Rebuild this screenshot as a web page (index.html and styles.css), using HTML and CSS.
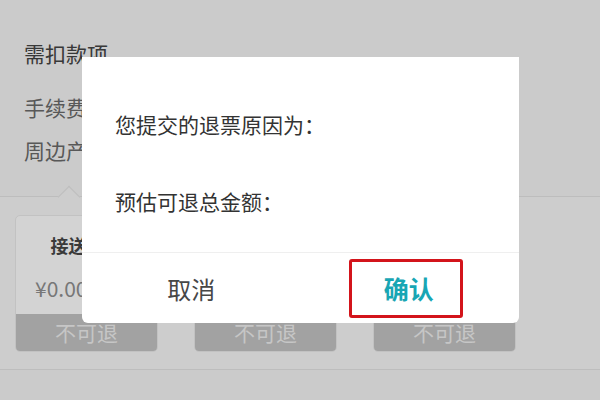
FILE: index.html
```html
<!DOCTYPE html>
<html>
<head>
<meta charset="utf-8">
<meta name="viewport" content="width=device-width, initial-scale=1">
<link rel="stylesheet" href="styles.css">
</head>
<body>

<div class="page">
  <div class="fee-head">需扣款项</div>
  <div class="fee-row">手续费</div>
  <div class="fee-row">周边产品</div>

  <div class="goods">
    <div class="card">
      <div class="card-name">接送服务</div>
      <div class="card-price">¥0.00</div>
      <div class="card-btn">不可退</div>
    </div>
    <div class="card">
      <div class="card-name">接送服务</div>
      <div class="card-price">¥0.00</div>
      <div class="card-btn">不可退</div>
    </div>
    <div class="card">
      <div class="card-name">接送服务</div>
      <div class="card-price">¥0.00</div>
      <div class="card-btn">不可退</div>
    </div>
  </div>
</div>

<div class="dialog">
  <div class="dialog-body">
    <p class="dialog-line">您提交的退票原因为：</p>
    <p class="dialog-line second">预估可退总金额：</p>
  </div>
  <div class="dialog-btns">
    <div class="btn cancel">取消</div>
    <div class="btn">
      <span class="confirm">确认</span>
    </div>
  </div>
</div>

</body>
</html>
```

FILE: styles.css
```css
* {
  box-sizing: border-box;
}

body {
  margin: 0;
  width: 600px;
  height: 400px;
  overflow: hidden;
  background-color: #cbcbcb;
  font-family: "Noto Sans CJK SC", "Noto Sans", sans-serif;
  position: relative;
}

.fee-head {
  padding: 38px 0 0 24px;
  line-height: 30px;
  font-size: 21px;
  color: #383838;
  margin-bottom: 18px;
}

.fee-row {
  padding-left: 24px;
  line-height: 43px;
  font-size: 21px;
  color: #585858;
}

.goods {
  position: relative;
  margin-top: 24px;
  border-top: 1px solid #bdbdbd;
  border-bottom: 1px solid #bdbdbd;
  background-color: #cdcdcd;
  padding: 18px 15px 17px;
  display: flex;
  gap: 36px;
}

.goods:before {
  content: "";
  position: absolute;
  left: 61px;
  top: -8px;
  width: 15px;
  height: 15px;
  background-color: #cdcdcd;
  border-top: 1px solid #bdbdbd;
  border-left: 1px solid #bdbdbd;
  transform: rotate(45deg);
}

.card {
  width: 143px;
  height: 137px;
  border: 1px solid #c2c2c2;
  border-radius: 5px;
  background-color: #d3d3d3;
  overflow: hidden;
  display: flex;
  flex-direction: column;
}

.card-name {
  margin-top: 17px;
  line-height: 24px;
  font-size: 18px;
  font-weight: bold;
  color: #3a3a3a;
  text-align: center;
}

.card-price {
  margin-top: 16px;
  padding-left: 19px;
  line-height: 30px;
  font-size: 21px;
  color: #777;
}

.card-btn {
  margin-top: auto;
  height: 37px;
  line-height: 37px;
  background-color: #a2a2a2;
  color: #c6c6c6;
  font-size: 21px;
  text-align: center;
}

.dialog {
  position: absolute;
  left: 82px;
  top: 57px;
  width: 437px;
  height: 266px;
  background-color: #fff;
  border-radius: 0 0 6px 6px;
}

.dialog-body {
  height: 195px;
  padding: 52px 33px 0;
}

.dialog-line {
  margin: 0;
  line-height: 30px;
  font-size: 21px;
  color: #333;
}

.second {
  margin-top: 47px;
}

.dialog-btns {
  border-top: 1px solid #efefef;
  height: 71px;
  display: flex;
}

.btn {
  flex: 1;
  display: flex;
  align-items: center;
  justify-content: center;
  font-size: 24px;
}

.cancel {
  color: #474747;
}

.confirm {
  width: 114px;
  height: 59px;
  margin-right: 8px;
  padding-left: 6px;
  border: 3px solid #d3141b;
  border-radius: 3px;
  display: flex;
  align-items: center;
  justify-content: center;
  color: #18a6b4;
  font-size: 25px;
  font-weight: bold;
}
```
